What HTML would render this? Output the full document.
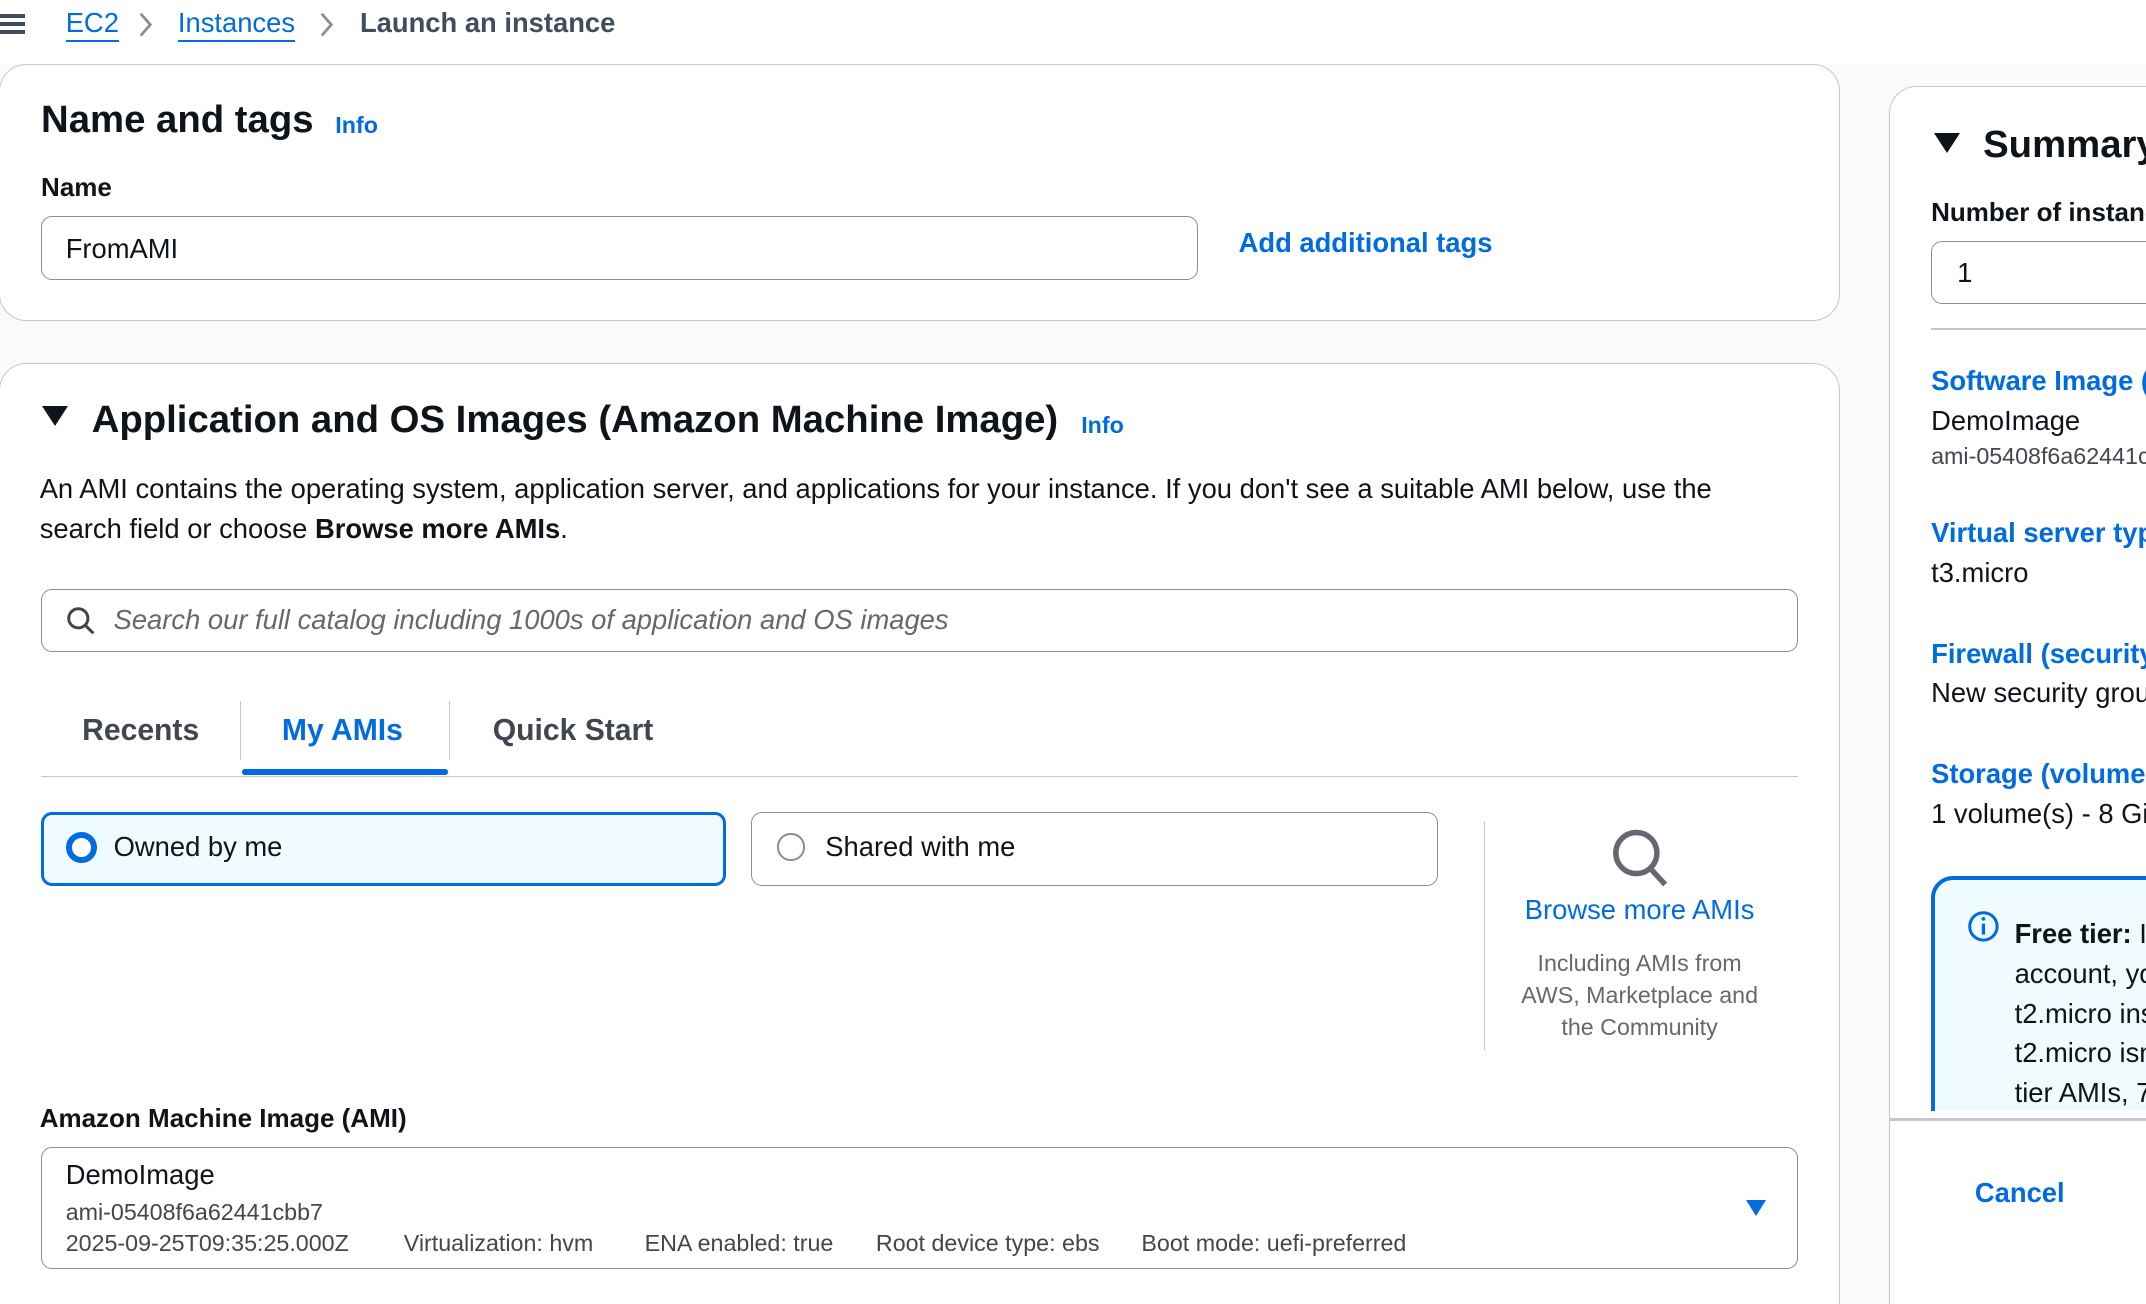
<!DOCTYPE html>
<html><head><meta charset="utf-8"><style>
html,body{margin:0;padding:0;background:#fff;overflow:hidden;width:2146px;height:1304px}
#w{zoom:1.36862;width:1568px;height:953px;position:relative;background:#fafafa;font-family:"Liberation Sans",sans-serif;color:#0f141a;overflow:hidden}
.a{position:absolute;white-space:nowrap}
.b{font-weight:bold}
.blue{color:#006ce0}
.card{position:absolute;background:#fff;border:1px solid #c6c6cd;border-radius:20px}
.inp{position:absolute;border:1px solid #8c8c94;border-radius:8px;background:#fff}
.d{position:absolute;top:899px;font-size:17px;line-height:20px;color:#424650;white-space:nowrap}
</style></head><body><div id="w">
<div class="a" style="left:0;top:0;width:1568px;height:47px;background:#fff"></div>
<div class="a" style="left:0;top:10px;width:18px;height:3px;background:#414d5c"></div>
<div class="a" style="left:0;top:16px;width:18px;height:3px;background:#414d5c"></div>
<div class="a" style="left:0;top:22px;width:18px;height:3px;background:#414d5c"></div>
<div class="a blue" style="left:48px;top:5px;font-size:20px;line-height:24px;border-bottom:2px solid #006ce0">EC2</div>
<svg class="a" style="left:101px;top:8px" width="12" height="20" viewBox="0 0 12 20"><path d="M2 2 L9 10 L2 18" fill="none" stroke="#8c8c94" stroke-width="2"/></svg>
<div class="a blue" style="left:130px;top:5px;font-size:20px;line-height:24px;border-bottom:2px solid #006ce0">Instances</div>
<svg class="a" style="left:233px;top:8px" width="12" height="20" viewBox="0 0 12 20"><path d="M2 2 L9 10 L2 18" fill="none" stroke="#8c8c94" stroke-width="2"/></svg>
<div class="a b" style="left:263px;top:5px;font-size:20px;line-height:24px;color:#414d5c">Launch an instance</div>

<div class="card" style="left:-1px;top:47px;width:1344px;height:186px"></div>
<div class="a b" style="left:30px;top:71px;font-size:28px;line-height:34px">Name and tags</div>
<div class="a b blue" style="left:245px;top:82px;font-size:17px;line-height:20px">Info</div>
<div class="a b" style="left:30px;top:126px;font-size:19px;line-height:22px">Name</div>
<div class="inp" style="left:30px;top:158px;width:844px;height:45px"></div>
<div class="a" style="left:48px;top:170px;font-size:20px;line-height:24px">FromAMI</div>
<div class="a b blue" style="left:905px;top:166px;font-size:20px;line-height:24px">Add additional tags</div>

<div class="card" style="left:-1px;top:265px;width:1344px;height:688px;border-bottom:none;border-radius:20px 20px 0 0"></div>
<div class="a" style="left:31px;top:297px;width:0;height:0;border-left:10px solid transparent;border-right:10px solid transparent;border-top:15px solid #0f141a"></div>
<div class="a b" style="left:67px;top:290px;font-size:28px;line-height:34px">Application and OS Images (Amazon Machine Image)</div>
<div class="a b blue" style="left:790px;top:301px;font-size:17px;line-height:20px">Info</div>
<div class="a" style="left:29px;top:343px;font-size:20px;line-height:29px;white-space:normal;width:1260px">An AMI contains the operating system, application server, and applications for your instance. If you don't see a suitable AMI below, use the search field or choose <b>Browse more AMIs</b>.</div>
<div class="inp" style="left:30px;top:430px;width:1282px;height:45px"></div>
<svg class="a" style="left:48px;top:443px" width="22" height="22" viewBox="0 0 22 22"><circle cx="9" cy="9" r="7" fill="none" stroke="#424650" stroke-width="2.2"/><line x1="14" y1="14" x2="20" y2="20" stroke="#424650" stroke-width="2.2"/></svg>
<div class="a" style="left:83px;top:441px;font-size:20px;line-height:24px;font-style:italic;color:#656871">Search our full catalog including 1000s of application and OS images</div>
<div class="a b" style="left:60px;top:521px;font-size:22px;line-height:26px;color:#424650">Recents</div>
<div class="a" style="left:175px;top:512px;width:1px;height:43px;background:#c6c6cd"></div>
<div class="a b blue" style="left:206px;top:521px;font-size:22px;line-height:26px">My AMIs</div>
<div class="a" style="left:328px;top:512px;width:1px;height:43px;background:#c6c6cd"></div>
<div class="a b" style="left:360px;top:521px;font-size:22px;line-height:26px;color:#424650">Quick Start</div>
<div class="a" style="left:30px;top:567px;width:1284px;height:1px;background:#c6c6cd"></div>
<div class="a" style="left:177px;top:562px;width:150px;height:4px;border-radius:2px;background:#006ce0"></div>
<div class="a" style="left:30px;top:593px;width:496px;height:50px;border:2.5px solid #006ce0;border-radius:8px;background:#f0fbff"></div>
<div class="a" style="left:48px;top:608px;width:14px;height:14px;border:5px solid #006ce0;border-radius:50%;background:#fff"></div>
<div class="a" style="left:83px;top:607px;font-size:20px;line-height:24px">Owned by me</div>
<div class="a" style="left:549px;top:593px;width:500px;height:53px;border:1px solid #8c8c94;border-radius:8px;background:#fff"></div>
<div class="a" style="left:568px;top:609px;width:20px;height:20px;border:2px solid #8c8c94;border-radius:50%;box-sizing:border-box"></div>
<div class="a" style="left:603px;top:607px;font-size:20px;line-height:24px">Shared with me</div>
<div class="a" style="left:1084px;top:600px;width:1px;height:167px;background:#c6c6cd"></div>
<svg class="a" style="left:1176px;top:604px" width="46" height="44" viewBox="0 0 46 44"><circle cx="20" cy="19" r="15" fill="none" stroke="#656871" stroke-width="4"/><line x1="30" y1="30" x2="41" y2="42" stroke="#656871" stroke-width="4"/></svg>
<div class="a blue" style="left:1098px;top:653px;width:200px;text-align:center;font-size:20px;line-height:24px">Browse more AMIs</div>
<div class="a" style="left:1106px;top:692px;width:184px;text-align:center;font-size:17px;line-height:23.5px;color:#656871;white-space:normal">Including AMIs from AWS, Marketplace and the Community</div>
<div class="a b" style="left:29px;top:806px;font-size:19px;line-height:22px">Amazon Machine Image (AMI)</div>
<div class="inp" style="left:30px;top:838px;width:1282px;height:88px"></div>
<div class="a" style="left:48px;top:847px;font-size:20px;line-height:24px">DemoImage</div>
<div class="a" style="left:48px;top:876px;font-size:17px;line-height:20px;color:#424650">ami-05408f6a62441cbb7</div>
<div class="d" style="left:48px">2025-09-25T09:35:25.000Z</div>
<div class="d" style="left:295px">Virtualization: hvm</div>
<div class="d" style="left:471px">ENA enabled: true</div>
<div class="d" style="left:640px">Root device type: ebs</div>
<div class="d" style="left:834px">Boot mode: uefi-preferred</div>
<div class="a" style="left:1276px;top:877px;width:0;height:0;border-left:8px solid transparent;border-right:8px solid transparent;border-top:12px solid #006ce0"></div>

<div class="card" style="left:1380px;top:63px;width:260px;height:890px;border-bottom:none;border-radius:20px 20px 0 0"></div>
<div class="a" style="left:1413px;top:97px;width:0;height:0;border-left:10px solid transparent;border-right:10px solid transparent;border-top:15px solid #0f141a"></div>
<div class="a b" style="left:1449px;top:89px;font-size:28px;line-height:34px">Summary</div>
<div class="a b" style="left:1411px;top:144px;font-size:19px;line-height:22px">Number of instances</div>
<div class="inp" style="left:1411px;top:176px;width:200px;height:45px"></div>
<div class="a" style="left:1430px;top:188px;font-size:20px;line-height:24px">1</div>
<div class="a" style="left:1411px;top:240px;width:200px;height:1px;background:#c6c6cd"></div>
<div class="a b blue" style="left:1411px;top:267px;font-size:20px;line-height:24px">Software Image (AMI)</div>
<div class="a" style="left:1411px;top:296px;font-size:20px;line-height:24px">DemoImage</div>
<div class="a" style="left:1411px;top:324px;font-size:17px;line-height:20px;color:#424650">ami-05408f6a62441cbb7</div>
<div class="a b blue" style="left:1411px;top:378px;font-size:20px;line-height:24px">Virtual server type</div>
<div class="a" style="left:1411px;top:407px;font-size:20px;line-height:24px">t3.micro</div>
<div class="a b blue" style="left:1411px;top:466px;font-size:20px;line-height:24px">Firewall (security group)</div>
<div class="a" style="left:1411px;top:495px;font-size:20px;line-height:24px">New security group</div>
<div class="a b blue" style="left:1411px;top:554px;font-size:20px;line-height:24px">Storage (volumes)</div>
<div class="a" style="left:1411px;top:583px;font-size:20px;line-height:24px">1 volume(s) - 8 GiB</div>
<div class="a" style="left:1411px;top:640px;width:200px;height:190px;border:3px solid #006ce0;border-radius:16px 0 0 0;background:#f0fbff"></div>
<svg class="a" style="left:1437px;top:665px" width="24" height="24" viewBox="0 0 24 24"><circle cx="12" cy="12" r="10" fill="none" stroke="#006ce0" stroke-width="2.2"/><line x1="12" y1="10" x2="12" y2="18" stroke="#006ce0" stroke-width="2.4"/><circle cx="12" cy="6.5" r="1.4" fill="#006ce0"/></svg>
<div class="a" style="left:1472px;top:668px;font-size:20px;line-height:29px">
<b>Free tier:</b> In your first year of opening an AWS<br>account, you get 750 hours per month of<br>t2.micro instance usage (or t3.micro where<br>t2.micro isn't available) when used with free<br>tier AMIs, 750 hours per month of public IPv4</div>
<div class="a" style="left:1381px;top:812px;width:200px;height:141px;background:#fff"></div>
<div class="a" style="left:1381px;top:817px;width:200px;height:2px;background:#c6c6cd"></div>
<div class="a b blue" style="left:1443px;top:860px;font-size:20px;line-height:24px">Cancel</div>
</div></body></html>
